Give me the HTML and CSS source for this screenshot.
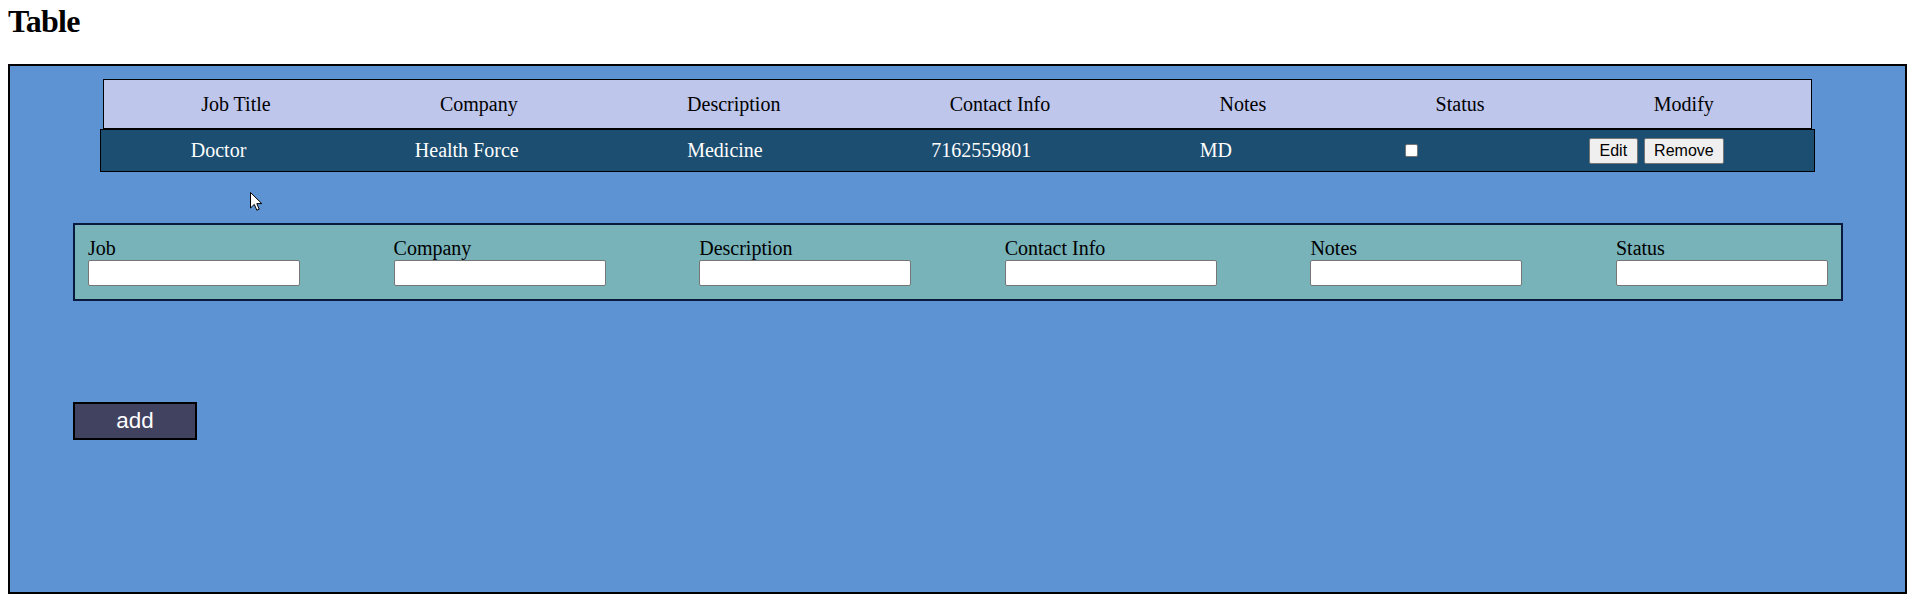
FILE: index.html
```html
<!DOCTYPE html>
<html lang="en">
<head>
<meta charset="utf-8">
<title>Table</title>
<link rel="stylesheet" href="styles.css">
</head>
<body>
<h1 class="title">Table</h1>
<div class="board">
  <div class="table">
    <div class="row head">
      <div class="cell">Job Title</div>
      <div class="cell">Company</div>
      <div class="cell">Description</div>
      <div class="cell">Contact Info</div>
      <div class="cell">Notes</div>
      <div class="cell">Status</div>
      <div class="cell">Modify</div>
    </div>
    <div class="row data">
      <div class="cell">Doctor</div>
      <div class="cell">Health Force</div>
      <div class="cell">Medicine</div>
      <div class="cell">7162559801</div>
      <div class="cell">MD</div>
      <div class="cell"><input type="checkbox" class="check"></div>
      <div class="cell actions"><button class="btn" type="button">Edit</button><button class="btn" type="button">Remove</button></div>
    </div>
  </div>
  <form class="entry">
    <div class="field"><label class="label">Job</label><input class="input" type="text"></div>
    <div class="field"><label class="label">Company</label><input class="input" type="text"></div>
    <div class="field"><label class="label">Description</label><input class="input" type="text"></div>
    <div class="field"><label class="label">Contact Info</label><input class="input" type="text"></div>
    <div class="field"><label class="label">Notes</label><input class="input" type="text"></div>
    <div class="field"><label class="label">Status</label><input class="input" type="text"></div>
  </form>
  <button class="add" type="button">add</button>
  <svg class="cursor" width="13" height="19" viewBox="0 0 13 19" aria-hidden="true">
    <path d="M0.5 0.5 L0.5 16 L4.3 12.4 L6.8 18.2 L9.2 17.2 L6.8 11.6 L11.8 11.6 Z" fill="#fff" stroke="#000" stroke-width="1" stroke-linejoin="miter"/>
  </svg>
</div>
</body>
</html>
```

FILE: styles.css
```css
* {
  box-sizing: border-box;
}

body {
  margin: 0 8px 8px;
  font-family: "Liberation Serif", "Times New Roman", serif;
  color: #000;
  background: #fff;
}

.title {
  font-size: 32px;
  font-weight: bold;
  line-height: 36px;
  letter-spacing: -0.7px;
  margin: 3px 0 25px;
}

.board {
  position: relative;
  height: 530px;
  border: 2px solid #000;
  background: #5e93d3;
  padding-top: 13px;
}

.table {
  margin: 0 90px;
}

.row {
  display: flex;
  justify-content: space-around;
  align-items: center;
  font-size: 20px;
  border: 1px solid #000;
}

.head {
  margin: 0 3px;
  padding: 12px 12.5px;
  line-height: 24px;
  background: #bec6ec;
}

.data {
  height: 43px;
  padding: 0 5.5px;
  line-height: 23px;
  background: #1c4e71;
  color: #fff;
}

.cell {
  white-space: nowrap;
}

.check {
  display: block;
  appearance: none;
  -webkit-appearance: none;
  margin: 3px 3px 3px 4px;
  width: 13px;
  height: 13px;
  background: #fff;
  border: 1px solid #767676;
  border-radius: 2px;
}

.actions {
  display: flex;
  gap: 6px;
}

.btn {
  height: 26px;
  padding: 0 9.5px;
  font-family: "Liberation Sans", Arial, sans-serif;
  font-size: 16px;
  color: #000;
  background: #efefef;
  border: 1px solid #767676;
  border-radius: 2px;
}

.entry {
  display: flex;
  justify-content: space-between;
  margin: 51px 62px 0 63px;
  padding: 12px 13px 13px;
  border: 2px solid #0a1a3c;
  background: #77b3b9;
}

.field {
  display: flex;
  flex-direction: column;
  width: 212px;
}

.label {
  font-size: 20px;
  line-height: 23px;
}

.input {
  display: block;
  width: 212px;
  height: 26px;
  margin: 0;
  border: 1px solid #767676;
  border-radius: 2px;
  background: #fff;
}

.add {
  display: block;
  margin: 101px 0 0 63px;
  width: 124px;
  height: 38px;
  padding: 0;
  border: 2px solid #000;
  background: #414160;
  color: #fff;
  font-family: "Liberation Sans", Arial, sans-serif;
  font-size: 22.4px;
}

.cursor {
  position: absolute;
  left: 240px;
  top: 126px;
}
```
